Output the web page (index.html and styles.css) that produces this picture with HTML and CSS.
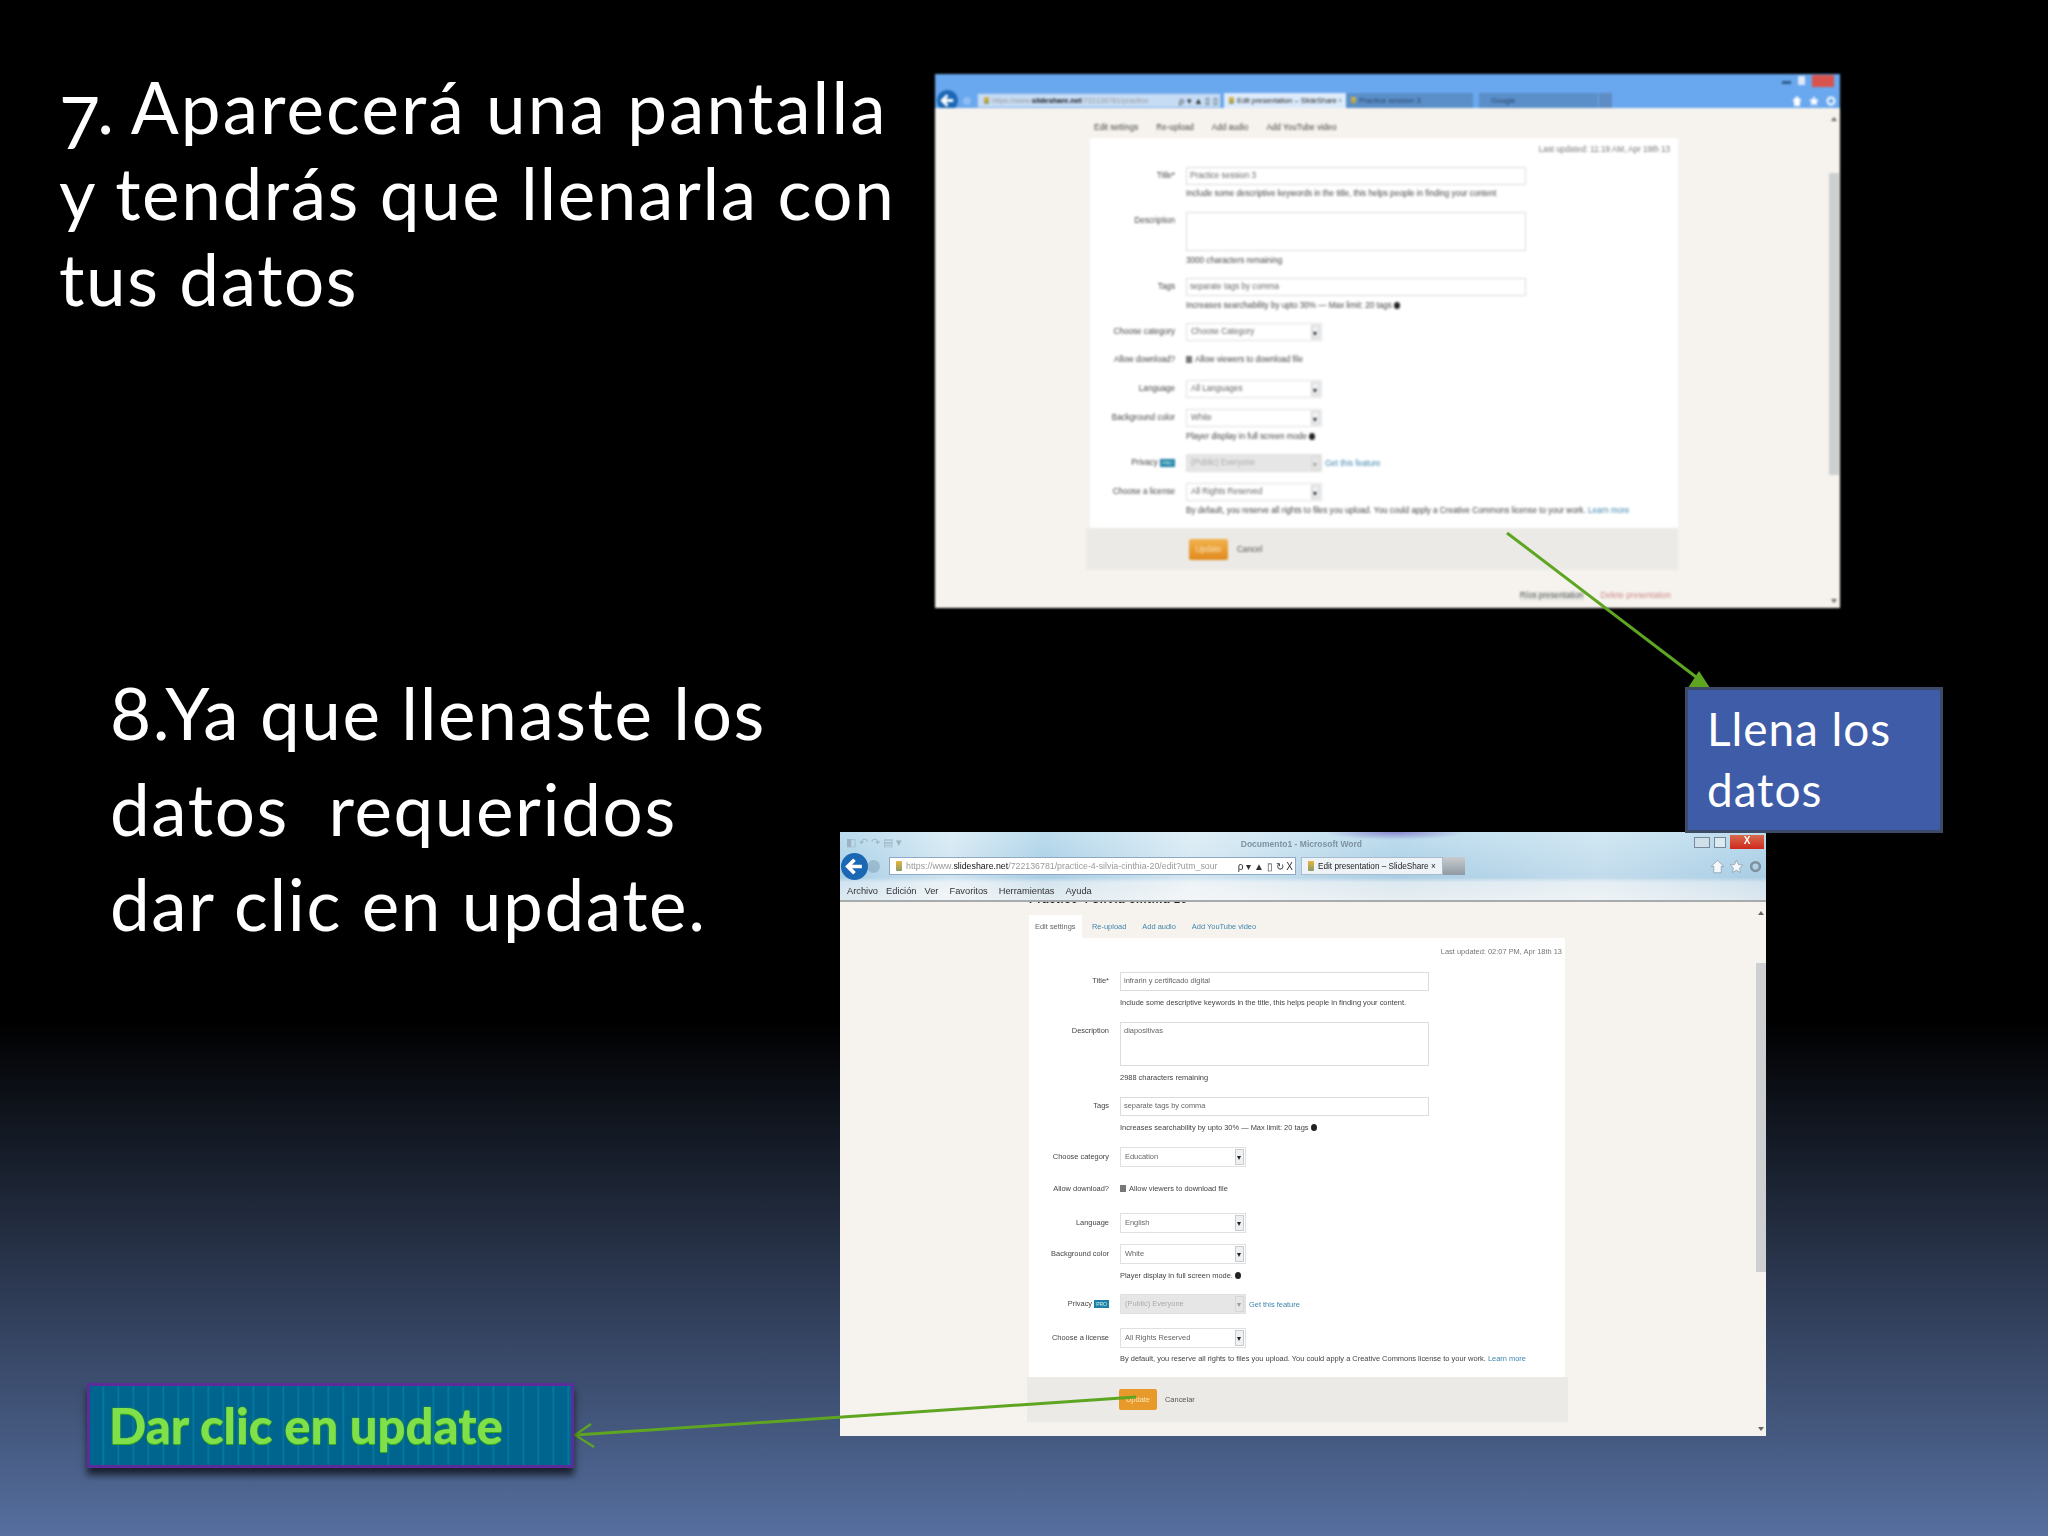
FILE: index.html
```html
<!DOCTYPE html>
<html lang="es">
<head>
<meta charset="utf-8">
<title>Aparecerá una pantalla</title>
<link rel="stylesheet" href="styles.css">
</head>
<body>
<main class="slide">
  <h2 class="headline headline--a"><span class="tight"><span class="old7">7</span>.</span> <span class="wide">Aparecerá una pantalla</span><br>y tendrás que llenarla con<br>tus datos</h2>
  <h2 class="headline headline--b">8.Ya que llenaste los<br>datos &nbsp;requeridos<br>dar clic en update.</h2>

  <section class="win win--a">
    <header class="chrome">
      <div class="caps">
        <span class="cap-min"></span><span class="cap-max"></span><span class="cap-close"></span>
      </div>
      <div class="nav">
        <span class="back"><svg viewBox="0 0 22 22"><path d="M17 11H6M11 5.5L5.5 11l5.5 5.5" fill="none" stroke="#fff" stroke-width="3"/></svg></span>
        <span class="fwd"></span>
        <div class="addr"><i class="fav"></i><span class="dim">https://www.</span><b>slideshare.net</b><span class="dim">/722136781/practice</span><span class="addr-tools">ρ ▾ ▲ ▯ ▯</span></div>
        <div class="tab tab--on"><i class="fav"></i>Edit presentation – SlideShare ›</div>
        <div class="tab tab--off"><i class="fav"></i>Practice session 3</div>
        <div class="tab tab--off tab--gap">Google</div>
        <div class="tab tab--stub"></div>
        <div class="tools">
          <svg viewBox="0 0 12 12"><path d="M6 1L1 6h2v5h6V6h2z" fill="#fff"/></svg>
          <svg viewBox="0 0 12 12"><path d="M6 1l1.6 3.4 3.4.4-2.5 2.4.7 3.6L6 9l-3.2 1.8.7-3.6L1 4.8l3.4-.4z" fill="#fff"/></svg>
          <svg viewBox="0 0 12 12"><circle cx="6" cy="6" r="3.5" fill="none" stroke="#fff" stroke-width="2"/></svg>
        </div>
      </div>
    </header>
    <div class="page">
      <div class="content">
        <nav class="tabs">
          <span class="tabs-on">Edit settings</span>
          <a>Re-upload</a>
          <a>Add audio</a>
          <a>Add YouTube video</a>
        </nav>
        <div class="panel">
          <p class="stamp">Last updated: 11:19 AM, Apr 19th 13</p>
          <div class="form">
            <label>Title*</label><div class="input">Practice session 3</div>
            <span></span><p class="hint">Include some descriptive keywords in the title, this helps people in finding your content</p>
            <label>Description</label><div class="input area"></div>
            <span></span><p class="hint">3000 characters remaining</p>
            <label>Tags</label><div class="input">separate tags by comma</div>
            <span></span><p class="hint">Increases searchability by upto 30% — Max limit: 20 tags <i class="dot"></i></p>
            <label>Choose category</label><div class="select"><span>Choose Category</span><i class="drop"></i></div>
            <label>Allow download?</label><p class="hint hint--dark"><i class="check"></i>Allow viewers to download file</p>
            <label>Language</label><div class="select"><span>All Languages</span><i class="drop"></i></div>
            <label>Background color</label><div class="select"><span>White</span><i class="drop"></i></div>
            <span></span><p class="hint">Player display in full screen mode <i class="dot"></i></p>
            <label>Privacy <em class="pro">PRO</em></label><div class="field-row"><div class="select select--off"><span>(Public) Everyone</span><i class="drop"></i></div><a class="link">Get this feature</a></div>
            <label>Choose a license</label><div class="select"><span>All Rights Reserved</span><i class="drop"></i></div>
            <span></span><p class="hint">By default, you reserve all rights to files you upload. You could apply a Creative Commons license to your work. <a class="link">Learn more</a></p>
          </div>
        </div>
        <div class="actions">
          <span class="btn">Update</span><span class="cancel">Cancel</span>
        </div>
        <div class="after"><span class="after-a">Ríos presentation</span><span class="after-b">Delete presentation</span></div>
      </div>
      <div class="scroll"><i class="thumb"></i></div>
    </div>
  </section>

  <section class="win win--b">
    <header class="chrome">
      <div class="caps">
        <span class="quick">◧ ↶ ↷ ▤ ▾</span>
        <span class="doc">Documento1 - Microsoft Word</span>
        <span class="cap-min"></span><span class="cap-max"></span><span class="cap-close">X</span>
      </div>
      <div class="nav">
        <span class="back"><svg viewBox="0 0 22 22"><path d="M17 11H6M11 5.5L5.5 11l5.5 5.5" fill="none" stroke="#fff" stroke-width="3"/></svg></span>
        <span class="fwd"></span>
        <div class="addr"><i class="fav"></i><span class="dim">https://www.</span><b>slideshare.net</b><span class="dim">/722136781/practice-4-silvia-cinthia-20/edit?utm_sour</span><span class="addr-tools">ρ ▾ ▲ ▯ ↻ X</span></div>
        <div class="tab tab--on"><i class="fav"></i>Edit presentation – SlideShare ×</div>
        <div class="tab tab--stub"></div>
        <div class="tools">
          <svg viewBox="0 0 12 12"><path d="M6 1L1 6h2v5h6V6h2z" fill="#f4f8fa" stroke="#8a9aa8" stroke-width=".6"/></svg>
          <svg viewBox="0 0 12 12"><path d="M6 1l1.6 3.4 3.4.4-2.5 2.4.7 3.6L6 9l-3.2 1.8.7-3.6L1 4.8l3.4-.4z" fill="#f4f8fa" stroke="#8a9aa8" stroke-width=".6"/></svg>
          <svg viewBox="0 0 12 12"><circle cx="6" cy="6" r="3.5" fill="none" stroke="#7f909e" stroke-width="2"/></svg>
        </div>
      </div>
      <div class="menu"><span>Archivo</span><span>Edición</span><span>Ver</span><span>Favoritos</span><span>Herramientas</span><span>Ayuda</span></div>
    </header>
    <div class="page">
      <div class="content">
        <div class="clip"><strong>Practice 4 silvia cinthia 20</strong></div>
        <nav class="tabs">
          <span class="tabs-on">Edit settings</span>
          <a>Re-upload</a>
          <a>Add audio</a>
          <a>Add YouTube video</a>
        </nav>
        <div class="panel">
          <p class="stamp">Last updated: 02:07 PM, Apr 18th 13</p>
          <div class="form">
            <label>Title*</label><div class="input">infrarin y certificado digital</div>
            <span></span><p class="hint">Include some descriptive keywords in the title, this helps people in finding your content.</p>
            <label>Description</label><div class="input area">diapositivas</div>
            <span></span><p class="hint">2988 characters remaining</p>
            <label>Tags</label><div class="input">separate tags by comma</div>
            <span></span><p class="hint">Increases searchability by upto 30% — Max limit: 20 tags <i class="dot"></i></p>
            <label>Choose category</label><div class="select"><span>Education</span><i class="drop"></i></div>
            <label>Allow download?</label><p class="hint hint--dark"><i class="check"></i>Allow viewers to download file</p>
            <label>Language</label><div class="select"><span>English</span><i class="drop"></i></div>
            <label>Background color</label><div class="select"><span>White</span><i class="drop"></i></div>
            <span></span><p class="hint">Player display in full screen mode. <i class="dot"></i></p>
            <label>Privacy <em class="pro">PRO</em></label><div class="field-row"><div class="select select--off"><span>(Public) Everyone</span><i class="drop"></i></div><a class="link">Get this feature</a></div>
            <label>Choose a license</label><div class="select"><span>All Rights Reserved</span><i class="drop"></i></div>
            <span></span><p class="hint">By default, you reserve all rights to files you upload. You could apply a Creative Commons license to your work. <a class="link">Learn more</a></p>
          </div>
        </div>
        <div class="actions">
          <span class="btn">Update</span><span class="cancel">Cancelar</span>
        </div>
      </div>
      <div class="scroll"><i class="thumb"></i></div>
    </div>
  </section>

  <svg class="arrows" viewBox="0 0 2048 1536" aria-hidden="true">
    <path class="arrow" d="M1507 533L1700 680"/>
    <path class="arrow-head" d="M1699 671L1688 688H1710Z"/>
    <path class="arrow" d="M1136 1397L576 1435"/>
    <path class="arrow arrow--thin" d="M591 1424L575 1435L594 1447"/>
  </svg>

  <div class="note note--fill">Llena los<br>datos</div>
  <div class="note note--click">Dar clic en update</div>
</main>
</body>
</html>
```
FILE: styles.css
```css
* { box-sizing: border-box; }
html, body { margin: 0; padding: 0; background: #000; }
p, h2 { margin: 0; }

.slide {
  position: relative;
  width: 2048px;
  height: 1536px;
  overflow: hidden;
  background: linear-gradient(180deg, #000 0, #000 1020px, #566f9f 1536px);
  font-family: Lato, "Open Sans", sans-serif;
}

.headline {
  position: absolute;
  color: #fff;
  font-weight: 400;
  font-size: 71px;
  letter-spacing: 1.6px;
  white-space: nowrap;
}
.old7 { vertical-align: -15px; line-height: 0; }
.tight { letter-spacing: -3px; }
.wide { letter-spacing: 2.1px; }
.headline--a { left: 59px; top: 64px; line-height: 86px; }
.headline--b { left: 110px; top: 665px; line-height: 95.5px; }

/* Screenshot windows */
.win {
  position: absolute;
  display: flex;
  flex-direction: column;
  font-family: "Liberation Sans", Arial, sans-serif;
  color: #333;
  overflow: hidden;
}
.win--a { left: 935px; top: 74px; width: 905px; height: 534px; font-size: 8.15px; filter: blur(.85px); }
.win--b { left: 840px; top: 832px; width: 926px; height: 604px; font-size: 7.45px; filter: blur(.7px); }

.chrome { flex: none; display: flex; flex-direction: column; }
.win--a .chrome { height: 34px; background: #69a7ee; }
.win--b .chrome {
  height: 70px;
  background:
    radial-gradient(70px 8px at 555px 0, rgba(110,90,190,.65), rgba(110,90,190,0)),
    linear-gradient(90deg, rgba(165,210,235,.2) 0, rgba(255,255,255,.45) 12%, rgba(160,205,230,.1) 22%, rgba(255,255,255,.5) 38%, rgba(190,220,238,0) 60%, rgba(255,255,255,.3) 82%, rgba(170,205,230,.2) 100%),
    linear-gradient(180deg, #bfdeee 0, #a9cde4 65%, #dbe8f0 72%, #e9eef1 100%);
}

.caps { display: flex; align-items: flex-start; justify-content: flex-end; flex: none; }
.win--a .caps { height: 19px; padding: 1px 6px 0 0; gap: 7px; }
.win--b .caps { height: 25px; padding: 3px 2px 0 6px; gap: 4px; }
.quick { margin-right: auto; color: #9db3c2; font-size: 11px; line-height: 14px; }
.doc { margin-right: 328px; color: #7e93a3; font-size: 8.5px; line-height: 18px; font-weight: 700; }
.cap-min, .cap-max { display: block; }
.win--a .cap-min { width: 9px; height: 3px; margin-top: 6px; background: #2f5d90; }
.win--a .cap-max { width: 7px; height: 9px; margin-top: 1px; background: #dfe9f5; }
.win--a .cap-close { width: 22px; height: 12px; background: #d8534c; }
.win--b .cap-min { width: 16px; height: 11px; margin-top: 2px; border: 1px solid #74889a; background: #cfe0ea; }
.win--b .cap-max { width: 12px; height: 11px; margin-top: 2px; border: 1px solid #74889a; background: #dceaf2; }
.win--b .cap-close {
  width: 34px; height: 14px;
  background: linear-gradient(180deg, #d66a4e, #d0291c);
  color: #fff; font-size: 10px; line-height: 12px; text-align: center; font-weight: 700;
}

.nav { display: flex; align-items: stretch; flex: none; }
.win--a .nav { height: 15px; padding-left: 2px; }
.win--b .nav { height: 18px; padding-left: 1px; margin-bottom: 6px; }
.back {
  flex: none; align-self: center;
  border-radius: 50%;
  background: #1a67b4;
}
.back svg { display: block; width: 100%; height: 100%; }
.win--a .back { width: 21px; height: 21px; margin: -4px 0; }
.win--b .back { width: 27px; height: 27px; margin: -5px 0; }
.fwd { flex: none; align-self: center; border-radius: 50%; background: rgba(90,120,150,.3); }
.win--a .fwd { width: 8px; height: 8px; margin: 0 6px 0 5px; background: rgba(255,255,255,.25); }
.win--b .fwd { width: 13px; height: 13px; margin: 0 9px 0 -1px; }

.fav { flex: none; display: block; border-radius: 1px; background: linear-gradient(#e8b43a, #8a9a6a); }
.win--a .fav { width: 5px; height: 7px; margin-right: 3px; }
.win--b .fav { width: 6px; height: 10px; margin-right: 4px; }

.addr {
  flex: none;
  display: flex; align-items: center;
  white-space: nowrap; overflow: hidden;
  background: #fff;
  border: 1px solid #8ea9c4;
  padding: 0 2px 0 6px;
  color: #222;
}
.win--a .addr { width: 244px; background: #c6dcf5; border-color: #7fb0e6; font-size: 7.4px; }
.win--b .addr { width: 407px; font-size: 8.8px; margin-right: 5px; padding-left: 6px; }
.dim { color: #9a9a9a; }
.addr b { font-weight: 400; color: #111; }
.win--a .addr b { font-weight: 700; }
.addr-tools { margin-left: auto; padding-left: 4px; color: #333; }
.win--a .addr-tools { font-size: 9px; }
.win--b .addr-tools { font-size: 10px; }

.tab { flex: none; display: flex; align-items: center; white-space: nowrap; padding-left: 5px; overflow: hidden; }
.tab--on { background: #eef3f8; color: #222; border: 1px solid #a9bccd; }
.win--a .tab--on { width: 122px; margin-left: 3px; background: #dcebfb; border: 0; font-size: 7.4px; }
.win--b .tab--on { width: 142px; font-size: 8.2px; padding-left: 6px; }
.tab--off { background: #5b8fc9; color: #27456a; width: 127px; font-size: 7.6px; }
.tab--gap { width: 119px; margin-left: 6px; padding-left: 12px; }
.tab--stub { padding: 0; }
.win--a .tab--stub { width: 13px; margin-left: 1px; background: #5e8cc4; }
.win--b .tab--stub { width: 22px; background: linear-gradient(180deg, #c8ccd0, #8f9aa3); }

.tools { margin-left: auto; display: flex; align-items: center; }
.tools svg { display: block; }
.win--a .tools { gap: 5px; padding-right: 3px; }
.win--a .tools svg { width: 12px; height: 12px; }
.win--b .tools { gap: 4px; padding-right: 3px; }
.win--b .tools svg { width: 15px; height: 15px; }

.menu { display: flex; gap: 8px; height: 21px; padding-left: 7px; align-items: center; font-size: 9.3px; color: #333; border-bottom: 2px solid #a7abae; }
.menu span:nth-child(n+4) { margin-left: 3px; }

/* Page body */
.page { flex: 1; display: flex; min-height: 0; background: #f6f3ee; }
.content { flex: 1; min-width: 0; }
.win--a .content { padding-left: 155px; }
.win--b .content { padding-left: 189px; }

.clip { height: 2px; overflow: hidden; }
.clip strong { display: block; margin-top: -9px; font-size: 11px; line-height: 12px; color: #222; letter-spacing: .8px; }

.tabs { display: flex; align-items: center; white-space: nowrap; color: #6b7f8c; }
.win--a .tabs { height: 30px; padding: 8px 0 0 4px; gap: 18px; color: #444; }
.win--b .tabs { height: 34px; margin-top: 0; padding-top: 11px; gap: 16px; color: #3f86ad; }
.win--b .tabs-on { align-self: stretch; display: flex; align-items: center; width: 53px; padding-left: 6px; margin-right: -6px; background: #fff; color: #666; }

.panel { background: #fff; display: flex; flex-direction: column; }
.win--a .panel { width: 588px; height: 390px; }
.win--b .panel { width: 536px; height: 439px; }
.stamp { text-align: right; color: #777; white-space: nowrap; line-height: 12px; }
.win--a .stamp { padding: 6px 8px 0 0; height: 29px; }
.win--b .stamp { padding: 8px 3px 0 0; height: 34px; }

.form { display: grid; column-gap: 11px; align-items: start; }
.win--a .form {
  grid-template-columns: 85px 1fr;
  grid-template-rows: 18px 27px 40px 26px 19px 26px 28px 29px 29px 19px 26px 29px 19px 18px;
}
.win--b .form {
  grid-template-columns: 80px 1fr;
  grid-template-rows: 22px 28px 47px 28px 22px 29px 32px 34px 31px 22px 28px 34px 21px 18px;
}
.form label { text-align: right; white-space: nowrap; color: #444; line-height: 18px; }
.pro { font-style: normal; font-size: 5px; padding: 1px 2px; background: #1f7fa8; color: #cfe; vertical-align: middle; }
.input, .select { height: 18px; line-height: 16px; color: #666; background: #fff; }
.input { border: 1px solid #dcdcda; padding-left: 3px; }
.win--a .input { width: 340px; }
.win--b .input { width: 309px; height: 19px; }
.win--a .area { height: 39px; }
.win--b .area { height: 44px; }
.select { display: flex; justify-content: space-between; border: 1px solid #e0e0de; padding-left: 4px; }
.win--a .select { width: 136px; }
.win--b .select { width: 126px; height: 20px; margin-top: -1px; line-height: 18px; }
.drop { flex: none; width: 9px; margin: 1px; background: #eef0f2; border: 1px solid #c9ccd0; position: relative; }
.drop::after { content: ""; position: absolute; left: 1px; top: 6px; border: 2.5px solid transparent; border-top: 4px solid #222; }
.select--off { background: #e6e6e6; color: #aaa; }
.select--off .drop { background: #e6e6e6; border-color: #d6d6d6; }
.select--off .drop::after { border-top-color: #999; }
.field-row { display: flex; align-items: center; gap: 3px; }
.link { color: #3f86ad; }
.hint { color: #444; line-height: 18px; white-space: nowrap; }
.hint--dark { color: #444; }
.dot { display: inline-block; width: 6px; height: 7px; border-radius: 50%; background: #222; vertical-align: -1px; }
.check { display: inline-block; width: 6px; height: 7px; margin-right: 3px; background: #777; vertical-align: -1px; }

.actions { display: flex; align-items: center; background: #ebeae6; }
.win--a .actions { width: 592px; height: 42px; margin-left: -4px; padding-left: 103px; gap: 9px; }
.win--b .actions { width: 541px; height: 45px; margin-left: -2px; padding-left: 92px; gap: 8px; }
.btn { display: flex; align-items: center; justify-content: center; height: 21px; border-radius: 2px; color: #fbe3b4; background: linear-gradient(#f2b24d, #e08a1e); }
.win--a .btn { width: 39px; }
.win--b .btn { width: 38px; background: #e79a2a; }
.cancel { color: #555; }
.after { display: flex; justify-content: flex-end; gap: 17px; width: 581px; padding-top: 21px; white-space: nowrap; line-height: 10px; }
.after-a { color: #555; background: #e9e9e5; }
.after-b { color: #c98a8a; }

.scroll { flex: none; width: 10px; position: relative; }
.thumb { display: block; background: #cdcfd0; }
.win--a .scroll { width: 10px; margin-right: 1px; }
.win--a .thumb { height: 302px; margin-top: 65px; }
.win--b .thumb { height: 309px; margin-top: 61px; }
.scroll::before, .scroll::after { content: ""; position: absolute; left: 2px; border: 3px solid transparent; }
.scroll::before { top: 6px; border-bottom: 4px solid #666; }
.scroll::after { bottom: 2px; border-top: 4px solid #666; }

/* Arrows */
.arrows { position: absolute; left: 0; top: 0; width: 2048px; height: 1536px; pointer-events: none; }
.arrow { fill: none; stroke: #5ea521; stroke-width: 3; }
.arrow--thin { stroke-width: 2.2; }
.arrow-head { fill: #5ea521; }

/* Callouts */
.note { position: absolute; white-space: nowrap; }
.note--fill {
  left: 1685px; top: 687px; width: 258px; height: 146px;
  padding: 8px 0 0 19px;
  background: #3f5ca8;
  border: 3px solid #3d4a68;
  color: #fff;
  font-weight: 400;
  font-size: 46px;
  line-height: 61px;
  letter-spacing: .9px;
}
.note--click {
  left: 87px; top: 1383px; width: 487px; height: 85px;
  padding-left: 19px;
  background: repeating-linear-gradient(90deg, #00658e 0, #00658e 12px, #087ba0 13px, #00658e 15px);
  border: 3px solid #5a2d9a;
  box-shadow: 0 7px 7px rgba(0,0,0,.65);
  color: #7fe04a;
  font-weight: 900;
  font-size: 49px;
  line-height: 79px;
  text-shadow: 0 0 2px #3a9d14, 0 1px 0 #3fae1a;
}
```
